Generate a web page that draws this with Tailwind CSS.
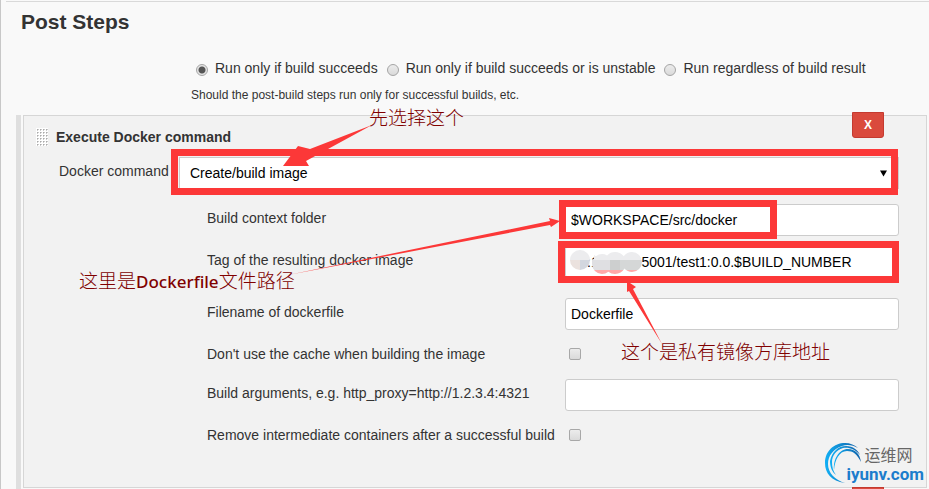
<!DOCTYPE html>
<html lang="zh-CN">
<head>
  <meta charset="UTF-8" />
  <meta name="viewport" content="width=device-width, initial-scale=1.0" />
  <title>Post Steps</title>
  <script src="https://cdn.jsdelivr.net/npm/@tailwindcss/browser@4"></script>
</head>
<body class="h-screen overflow-hidden border-l border-[#c8c8c8] bg-[#f9f9f9] font-['Liberation_Sans','Noto_Sans_CJK_SC',sans-serif] text-sm text-[#333333]">

<main class="flex h-full flex-col">
  <header class="ml-[5px] mt-px border-t border-[#d9d9d9] pl-[15px] pt-2">
    <h1 class="text-[21px] leading-6 font-bold">Post Steps</h1>
  </header>

  <fieldset class="mt-6 ml-[190px]">
    <div class="flex h-5 items-center gap-[9px]">
      <label class="flex items-center gap-[7px] pl-[5px]">
        <input type="radio" name="run" checked class="mt-1 size-3 appearance-none rounded-full border border-[#a5a5a5] bg-[radial-gradient(circle,#555_0,#555_3px,#e4e4e4_4px)]">Run only if build succeeds</label>
      <label class="flex items-center gap-[7px]">
        <input type="radio" name="run" class="mt-1 size-3 appearance-none rounded-full border border-[#a5a5a5] bg-linear-to-b from-[#ececec] to-[#dadada]">Run only if build succeeds or is unstable</label>
      <label class="flex items-center gap-[7px]">
        <input type="radio" name="run" class="mt-1 size-3 appearance-none rounded-full border border-[#a5a5a5] bg-linear-to-b from-[#ececec] to-[#dadada]">Run regardless of build result</label>
    </div>
    <p class="mt-[9px] text-xs leading-4">Should the post-build steps run only for successful builds, etc.</p>
  </fieldset>

  <div class="mt-3 ml-[15px] mr-0.5 flex flex-1 items-start">
    <div class="mr-0.5 w-[5px] shrink-0 self-stretch bg-[#dfdfdf]"></div>

    <section class="relative h-[373px] min-w-0 flex-1 border border-[#d6d6d6] bg-[#f2f2f2] pr-[27px]">
      <button type="button" class="absolute -top-1 right-[42px] h-[26px] w-8 rounded-b-[3px] border border-[#c43a30] bg-[#da4a3d] text-xs font-bold text-white">X</button>

      <div class="flex items-center gap-2 pl-3 pt-3">
        <svg class="h-[18px] w-3" viewBox="0 0 12 18" aria-hidden="true">
          <defs>
            <pattern id="grip" width="3" height="3" patternUnits="userSpaceOnUse"><rect width="3" height="3" fill="#fff" /><rect x="1" y="1" width="1" height="1" fill="#aaa" /><rect x="2" y="1" width="1" height="1" fill="#ccc" /><rect x="1" y="2" width="1" height="1" fill="#ccc" /></pattern>
          </defs>
          <rect width="12" height="18" fill="url(#grip)" />
        </svg>
        <h2 class="text-sm leading-[18px] font-bold">Execute Docker command</h2>
      </div>

      <div class="mt-[11px] flex">
        <label for="command" class="w-[120px] shrink-0 pl-[35px] pt-1 leading-5 whitespace-nowrap">Docker command</label>
        <div class="relative ml-[35px] flex-1">
          <select id="command" class="block h-8 w-full appearance-none border border-[#cccccc] bg-white pl-2.5 text-black">
            <option>Create/build image</option>
          </select>
          <svg class="absolute top-[13px] right-3 h-[7px] w-[7px]" viewBox="0 0 7 7" aria-hidden="true"><path d="M0 0.500H7L3.500 6.500Z" fill="#000" /></svg>
          <div class="pointer-events-none absolute -top-2 right-px bottom-[-6px] -left-2 border-7 border-[#fc3838]"></div>
        </div>
      </div>

      <div class="mt-[15px] flex pl-[183px]">
        <label for="context" class="w-[358px] shrink-0 pt-1 leading-5">Build context folder</label>
        <div class="relative flex-1">
          <input id="context" type="text" value="$WORKSPACE/src/docker" class="block h-8 w-full rounded-[3px] border border-[#cccccc] bg-white px-[5px] text-black">
          <div class="pointer-events-none absolute -top-1 bottom-[-3px] -left-1.5 w-[218px] border-7 border-[#fc3838]"></div>
        </div>
      </div>

      <div class="mt-2.5 flex pl-[183px]">
        <label for="tag" class="w-[358px] shrink-0 pt-1 leading-5">Tag of the resulting docker image</label>
        <div class="relative flex-1">
          <input id="tag" type="text" value=":1           5001/test1:0.0.$BUILD_NUMBER" class="block h-8 w-full rounded-[3px] border border-[#cccccc] bg-white pr-[5px] pl-[21px] text-black">
          <div class="pointer-events-none absolute -top-[5px] right-0 bottom-[-5px] -left-[7px] border-7 border-[#fc3838]"></div>
          <svg class="absolute top-0 left-0 h-8 w-20" viewBox="565 246 80 32" aria-hidden="true">
            <defs>
              <clipPath id="dot"><circle cx="580" cy="260" r="10" /></clipPath>
              <clipPath id="dots"><circle cx="602" cy="264" r="10" /><circle cx="593" cy="259" r="4" /><circle cx="615" cy="263" r="11" /><circle cx="632" cy="262" r="10" /></clipPath>
            </defs>
            <g clip-path="url(#dot)">
              <path fill="#ececee" d="M570 250h20v10h-20z" /><path fill="#ebe2de" d="M570 260h10v10h-10z" /><path fill="#d3d7df" d="M580 260h10v10h-10z" />
            </g>
            <g clip-path="url(#dots)">
              <path fill="#ececee" d="M594 250h51v10h-51z" /><path fill="#dfdfe2" d="M592 260h18v10h-18z" /><path fill="#cdcfcf" d="M610 260h10v10h-10z" /><path fill="#d5d7d7" d="M620 260h25v10h-25z" /><path fill="#ffa8a8" d="M590 270h55v6h-55z" />
            </g>
          </svg>
        </div>
      </div>

      <div class="mt-5 flex pl-[183px]">
        <label for="filename" class="w-[358px] shrink-0 pt-1 leading-5">Filename of dockerfile</label>
        <input id="filename" type="text" value="Dockerfile" class="h-8 min-w-0 flex-1 rounded-[3px] border border-[#cccccc] bg-white px-[5px] text-black">
      </div>

      <div class="mt-3.5 flex items-center pl-[183px]">
        <label for="nocache" class="w-[362px] shrink-0 leading-5">Don't use the cache when building the image</label>
        <input id="nocache" type="checkbox" class="size-3 appearance-none rounded-[2px] border border-[#a8a8a8] bg-linear-to-b from-[#ececec] to-[#dadada]">
      </div>

      <div class="mt-[15px] flex pl-[183px]">
        <label for="args" class="w-[358px] shrink-0 pt-1 leading-5">Build arguments, e.g. http_proxy=http://1.2.3.4:4321</label>
        <input id="args" type="text" class="h-8 min-w-0 flex-1 rounded-[3px] border border-[#cccccc] bg-white px-[5px] text-black">
      </div>

      <div class="mt-3.5 flex items-center pl-[183px]">
        <label for="rm" class="w-[362px] shrink-0 leading-5">Remove intermediate containers after a successful build</label>
        <input id="rm" type="checkbox" class="size-3 appearance-none rounded-[2px] border border-[#a8a8a8] bg-linear-to-b from-[#ececec] to-[#dadada]">
      </div>

      <!-- arrows and notes drawn over the form -->
      <svg class="pointer-events-none absolute top-0 left-0 h-[371px] w-[902px]" viewBox="24 116 902 371" aria-hidden="true">
        <g fill="#fc3838">
          <path d="M372 125L310 149L298 146L283 166H309L306 161L328 149Z" />
          <path d="M288 275L550 221L549 218L560 221L551 227L550 225Z" />
          <path d="M662 344L629 291L627 292V281L636 287L633 289Z" />
        </g>
      </svg>
      <p class="pointer-events-none absolute -top-3 left-[345px] font-['Noto_Sans','Noto_Sans_CJK_SC',sans-serif] text-[19px] leading-7 font-light whitespace-nowrap text-[#800000]">先选择这个</p>
      <p class="pointer-events-none absolute top-[151px] left-[55px] font-['Noto_Sans','Noto_Sans_CJK_SC',sans-serif] text-[19px] leading-7 font-light whitespace-nowrap text-[#800000]">这里是<span class="text-[17px] font-medium">Dockerfile</span>文件路径</p>
      <p class="pointer-events-none absolute top-[222px] left-[597px] font-['Noto_Sans','Noto_Sans_CJK_SC',sans-serif] text-[19px] leading-7 font-light whitespace-nowrap text-[#800000]">这个是私有镜像方库地址</p>

      <div class="absolute right-0.5 bottom-1 flex items-end">
        <svg class="h-10 w-10" viewBox="0 0 40 40" aria-hidden="true">
          <defs>
            <linearGradient id="swirl" x1="0" y1="0" x2="1" y2="0"><stop offset="0" stop-color="#12b0f5" /><stop offset="1" stop-color="#0e5fa8" /></linearGradient>
          </defs>
          <g fill="url(#swirl)">
            <path d="M21 40C7 38 1 30 1 20C1 8 10 0 21 0C26 0 31 2 34 5C29 2 23 1 18 3C9 6 4 13 4 21C4 30 11 37 21 40Z" />
            <path d="M12 32C8 29 6 24 6 18C8 9 14 3 22 3C29 3 34 7 36 12C31 6 25 4 19 5C12 7 8 13 8 19C8 24 9 28 12 32Z" />
            <path d="M10 27C9 16 15 6 24 6C31 6 36 11 37 19C33 11 29 8 23 8C15 8 11 17 10 27Z" />
          </g>
        </svg>
        <div class="-ml-[18px]">
          <p class="pl-[18px] text-base leading-[18px] text-[#666666]">运维网</p>
          <p class="font-[Roboto] text-[17px] leading-[18px] font-bold text-[#1c7dcc]">iyunv.com</p>
        </div>
      </div>

      <button type="button" aria-label="X" class="absolute top-full right-[42px] h-[26px] w-8 border border-[#c43a30] bg-[#da4a3d]"></button>
    </section>
  </div>
</main>

</body>
</html>
